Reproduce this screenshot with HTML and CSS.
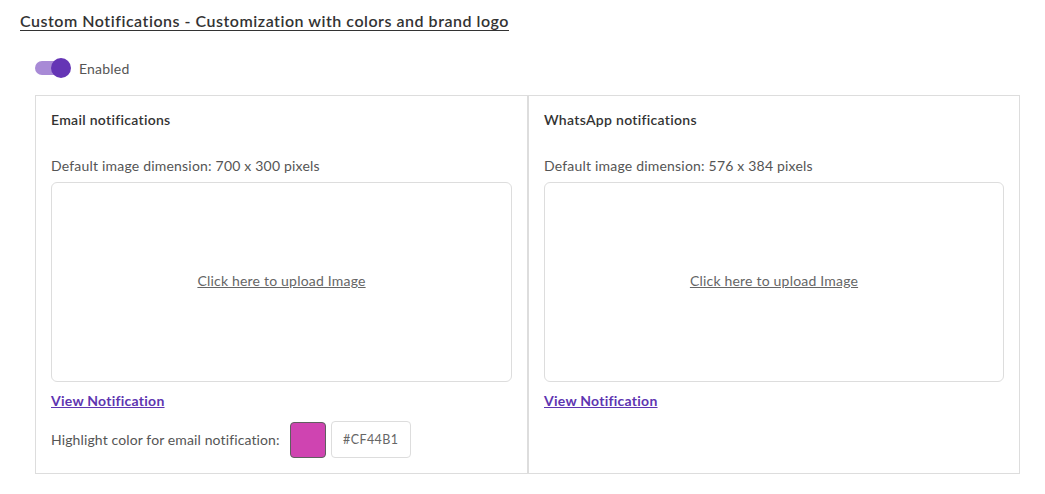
FILE: index.html
```html
<!DOCTYPE html>
<html lang="en">
<head>
<meta charset="utf-8">
<title>Custom Notifications</title>
<link rel="stylesheet" href="styles.css">
</head>
<body>
<div class="page">
  <h1 class="title">Custom Notifications - Customization with colors and brand logo</h1>
  <div class="toggle-row">
    <span class="toggle"><span class="track"></span><span class="knob"></span></span>
    <span class="toggle-label">Enabled</span>
  </div>
  <div class="panels">
    <section class="panel">
      <h2 class="panel-title">Email notifications</h2>
      <p class="dim">Default image dimension: 700 x 300 pixels</p>
      <div class="upload"><a class="upload-link">Click here to upload Image</a></div>
      <a class="view-link">View Notification</a>
      <div class="color-row">
        <span class="color-label">Highlight color for email notification:</span>
        <span class="swatch"></span>
        <span class="hex">#CF44B1</span>
      </div>
    </section>
    <section class="panel">
      <h2 class="panel-title">WhatsApp notifications</h2>
      <p class="dim">Default image dimension: 576 x 384 pixels</p>
      <div class="upload"><a class="upload-link">Click here to upload Image</a></div>
      <a class="view-link">View Notification</a>
    </section>
  </div>
</div>
</body>
</html>
```

FILE: styles.css
```css
* { box-sizing: border-box; }
html, body { margin: 0; padding: 0; background: #fff; }
body {
  font-family: Lato, "Open Sans", Arial, sans-serif;
  color: #333;
}
.page {
  padding: 11px 25px 0 20px;
  width: 1045px;
}
.title {
  margin: 0;
  font-size: 16px;
  line-height: 20px;
  font-weight: 600;
  color: #333;
  text-decoration: underline;
  text-underline-offset: 3px;
  letter-spacing: 0.52px;
}
.toggle-row {
  display: flex;
  align-items: center;
  gap: 8px;
  margin: 27px 0 0 15px;
  height: 20px;
}
.toggle {
  position: relative;
  width: 36px;
  height: 20px;
  display: inline-block;
}
.track {
  position: absolute;
  left: 0;
  top: 3px;
  width: 34px;
  height: 14px;
  border-radius: 7px;
  background: #a88ad6;
}
.knob {
  position: absolute;
  left: 16px;
  top: 0;
  width: 20px;
  height: 20px;
  border-radius: 50%;
  background: #6535b5;
}
.toggle-label {
  font-size: 14px;
  color: #555;
  letter-spacing: 0.2px;
}
.panels {
  display: flex;
  margin: 17px 0 0 15px;
}
.panel {
  border: 1px solid #ddd;
  padding: 14px 15px 15px;
  height: 379px;
}
.panel:first-child { width: 493px; }
.panel:last-child { width: 492px; }
.panel-title {
  margin: 0;
  font-size: 14px;
  line-height: 20px;
  font-weight: 600;
  color: #333;
  letter-spacing: 0.3px;
}
.dim {
  margin: 26px 0 0;
  font-size: 14px;
  line-height: 20px;
  color: #555;
  letter-spacing: 0.2px;
}
.upload {
  margin-top: 6px;
  height: 200px;
  border: 1px solid #ddd;
  border-radius: 6px;
  display: flex;
  align-items: center;
  justify-content: center;
}
.upload-link {
  font-size: 14px;
  line-height: 20px;
  color: #666;
  text-decoration: underline;
  letter-spacing: 0.2px;
  margin-top: -2px;
}
.view-link {
  display: inline-block;
  margin-top: 9px;
  font-size: 14px;
  line-height: 20px;
  font-weight: 700;
  color: #5e35b1;
  text-decoration: underline;
  letter-spacing: 0.25px;
}
.color-row {
  display: flex;
  align-items: center;
  margin-top: 10px;
  height: 37px;
}
.color-label {
  font-size: 14px;
  color: #555;
  letter-spacing: 0.12px;
}
.swatch {
  width: 36px;
  height: 36px;
  margin-left: 10px;
  border-radius: 4px;
  background: #cf44b1;
  border: 1px solid #5f5f5f;
}
.hex {
  width: 80px;
  height: 37px;
  margin-left: 5px;
  border: 1px solid #ddd;
  border-radius: 4px;
  display: flex;
  align-items: center;
  justify-content: center;
  font-size: 12.5px;
  color: #666;
  letter-spacing: 0.4px;
}
```
